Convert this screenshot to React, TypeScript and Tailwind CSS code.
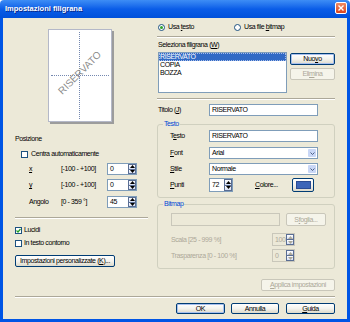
import clsx from "clsx";
import { ReactNode } from "react";

const Sep = ({ className }: { className?: string }) => (
  <div className={clsx("h-[2px] border-t border-t-[#ACA899] border-b border-b-white", className)} />
);

const Btn = ({
  children,
  className,
  disabled,
  def,
}: {
  children: ReactNode;
  className?: string;
  disabled?: boolean;
  def?: boolean;
}) => (
  <div
    className={clsx(
      "flex items-center justify-center rounded-[2px] border",
      disabled
        ? "border-[#C9C7BA] bg-[#F5F4EA] text-[#ACA899]"
        : "border-[#003C74] bg-linear-to-b from-white via-[#F4F3EE] to-[#DDDACB] text-black",
      def && "shadow-[inset_0_0_0_1px_#A8C0EE]",
      className
    )}
  >
    {children}
  </div>
);

const Arrow = ({ up, disabled }: { up?: boolean; disabled?: boolean }) => (
  <svg width="5" height="3" viewBox="0 0 5 3" className="block">
    <path d={up ? "M0 3L2.5 0L5 3Z" : "M0 0L2.5 3L5 0Z"} fill={disabled ? "#ACA899" : "#000"} />
  </svg>
);

const Spin = ({
  value,
  className,
  disabled,
}: {
  value: string;
  className?: string;
  disabled?: boolean;
}) => (
  <div
    className={clsx(
      "flex border",
      disabled ? "border-[#C9C7BA] bg-[#ECE9D8] text-[#ACA899]" : "border-[#7F9DB9] bg-white",
      className
    )}
  >
    <div className="flex-1 flex items-center pl-[2px]">{value}</div>
    <div className="w-[8px] flex flex-col">
      <div className="flex-1 flex items-center justify-center border border-[#5A6E94] bg-linear-to-b from-white to-[#D6DFF5]">
        <Arrow up disabled={disabled} />
      </div>
      <div className="flex-1 flex items-center justify-center border border-t-0 border-[#5A6E94] bg-linear-to-b from-white to-[#D6DFF5]">
        <Arrow disabled={disabled} />
      </div>
    </div>
  </div>
);

const Select = ({ value }: { value: string }) => (
  <div className="w-[109px] h-[12px] flex border border-[#7F9DB9] bg-white">
    <div className="flex-1 flex items-center pl-[2px]">{value}</div>
    <div className="w-[8px] m-[1px] flex items-center justify-center rounded-[1px] bg-[#C9D7F6]">
      <svg width="5" height="3" viewBox="0 0 5 3">
        <path d="M0.5 0.5L2.5 2.5L4.5 0.5" stroke="#4D6185" strokeWidth="1" fill="none" />
      </svg>
    </div>
  </div>
);

const Check = ({ checked }: { checked?: boolean }) => (
  <div className="w-[7px] h-[7px] border border-[#1C5180] bg-white flex items-center justify-center">
    {checked && (
      <svg width="5" height="5" viewBox="0 0 5 5">
        <path d="M0.5 2.5L2 4L4.5 1" stroke="#21A121" strokeWidth="1.2" fill="none" />
      </svg>
    )}
  </div>
);

const Radio = ({ checked }: { checked?: boolean }) => (
  <div className="w-[7px] h-[7px] rounded-full border border-[#1C5180] bg-white flex items-center justify-center">
    {checked && <div className="w-[3px] h-[3px] rounded-full bg-[#2DA12D]" />}
  </div>
);

const Group = ({
  label,
  className,
  children,
}: {
  label: string;
  className?: string;
  children: ReactNode;
}) => (
  <div className={clsx("relative border border-[#D0D0BF] rounded-[3px] flex flex-col", className)}>
    <span className="absolute -top-[5px] left-[5px] px-[1px] bg-[#ECE9D8] text-[#0046D5]">{label}</span>
    {children}
  </div>
);

const PosRow = ({ label, range, value, className }: { label: ReactNode; range: string; value: string; className?: string }) => (
  <div className={clsx("flex items-center h-[12px]", className)}>
    <span className="ml-[14px] w-[32px]">{label}</span>
    <span className="w-[46px]">{range}</span>
    <Spin value={value} className="w-[30px] h-[12px]" />
  </div>
);

const TextRow = ({ label, children, className }: { label: ReactNode; children: ReactNode; className?: string }) => (
  <div className={clsx("flex items-center", className)}>
    <span className="ml-[12px] w-[39px]">{label}</span>
    {children}
  </div>
);

export default function App() {
  return (
    <div className="w-[350px] h-[322px] flex flex-col font-['Liberation_Sans',Arial,sans-serif] text-[7px] leading-[8px] tracking-[-0.4px] text-black select-none">
      {/* TITLE BAR */}
      <div className="h-[18px] flex items-start justify-between pl-[5px] pr-[3px] rounded-t-[4px] bg-linear-to-b from-[#3D8DF5] via-[#0A5DE8] to-[#0050DA]">
        <span className="mt-[5px] text-[7.5px] tracking-normal font-bold text-white [text-shadow:1px_1px_0_#0A2A8A]">
          Impostazioni filigrana
        </span>
        <div className="mt-[2px] w-[12px] h-[12px] rounded-[2px] border border-white bg-linear-to-b from-[#F08A62] to-[#D9421A] flex items-center justify-center">
          <svg width="6" height="6" viewBox="0 0 6 6">
            <path d="M0.5 0.5L5.5 5.5M5.5 0.5L0.5 5.5" stroke="white" strokeWidth="1.4" />
          </svg>
        </div>
      </div>

      {/* BODY */}
      <div className="flex-1 flex flex-col bg-[#ECE9D8] border-x-[3px] border-b-[3px] border-[#0055E5] pl-[12px]">
        <div className="flex items-start gap-[9px]">
          {/* LEFT */}
          <div className="w-[133px] flex flex-col">
            <div className="ml-[33px] mt-[11px] w-[64px] h-[93px] relative bg-white border border-[#B4B8C8] shadow-[2px_2px_0_#9C9C9C]">
              <div className="absolute left-[30px] top-[2px] bottom-[2px] border-l border-dotted border-[#7488B0]" />
              <div className="absolute top-[45px] left-[2px] right-[2px] border-t border-dotted border-[#7488B0]" />
              <div className="absolute inset-0 flex items-center justify-center">
                <span className="-rotate-45 -translate-y-[3px] text-[10px] leading-[10px] tracking-normal text-[#8C8C8C]">
                  RISERVATO
                </span>
              </div>
            </div>
            <div className="mt-[13px]">Posizione</div>
            <div className="mt-[7px] ml-[6px] flex items-center gap-[3px] h-[8px]">
              <Check />
              <span>Centra automaticamente</span>
            </div>
            <PosRow label={<u>x</u>} range="[-100 - +100]" value="0" className="mt-[5px]" />
            <PosRow label={<u>y</u>} range="[-100 - +100]" value="0" className="mt-[4px]" />
            <PosRow label="Angolo" range="[0 - 359 °]" value="45" className="mt-[5px]" />
            <Sep className="mt-[9px]" />
            <div className="mt-[7px] flex items-center gap-[2px] h-[8px]">
              <Check checked />
              <span>Lucidi</span>
            </div>
            <div className="mt-[5px] flex items-center gap-[2px] h-[8px]">
              <Check />
              <span>In testo contorno</span>
            </div>
            <Btn className="mt-[8px] w-[100px] h-[12px]">
              <span>
                Impostazioni personalizzate (<u>K</u>)...
              </span>
            </Btn>
          </div>

          {/* RIGHT */}
          <div className="w-[178px] flex flex-col">
            <div className="mt-[5px] ml-[1px] flex items-center h-[8px]">
              <div className="w-[76px] flex items-center gap-[3px]">
                <Radio checked />
                <span>
                  Usa <u>t</u>esto
                </span>
              </div>
              <div className="flex items-center gap-[3px]">
                <Radio />
                <span>
                  Usa file <u>b</u>itmap
                </span>
              </div>
            </div>
            <Sep className="mt-[5px]" />
            <div className="mt-[3px] ml-[1px]">
              Seleziona filigrana (<u>W</u>)
            </div>
            <div className="mt-[3px] ml-[1px] flex items-start">
              <div className="w-[130px] h-[41px] border border-[#7F9DB9] bg-white flex flex-col">
                <div className="h-[8px] bg-[#316AC5] text-white pl-[1px] outline outline-dotted outline-[#A8BCE8] -outline-offset-1">
                  RISERVATO
                </div>
                <div className="h-[8px] pl-[1px]">COPIA</div>
                <div className="h-[8px] pl-[1px]">BOZZA</div>
              </div>
              <div className="ml-[3px] flex flex-col">
                <Btn def className="mt-[1px] w-[45px] h-[12px]">
                  <span>
                    Nuo<u>v</u>o
                  </span>
                </Btn>
                <Btn disabled className="mt-[3px] w-[45px] h-[12px]">
                  <span>
                    Eli<u>m</u>ina
                  </span>
                </Btn>
              </div>
            </div>
            <Sep className="mt-[5px]" />
            <div className="mt-[4px] flex items-center h-[12px]">
              <span className="ml-[1px] w-[51px]">
                Titolo (<u>J</u>)
              </span>
              <div className="w-[109px] h-[12px] border border-[#7F9DB9] bg-white flex items-center pl-[2px]">RISERVATO</div>
            </div>

            <Group label="Testo" className="mt-[8px] h-[74px]">
              <TextRow label={<span>T<u>e</u>sto</span>} className="mt-[5px]">
                <div className="w-[109px] h-[12px] border border-[#7F9DB9] bg-white flex items-center pl-[2px]">RISERVATO</div>
              </TextRow>
              <TextRow label={<span><u>F</u>ont</span>} className="mt-[5px]">
                <Select value="Arial" />
              </TextRow>
              <TextRow label={<span><u>S</u>tile</span>} className="mt-[4px]">
                <Select value="Normale" />
              </TextRow>
              <TextRow label={<span><u>P</u>unti</span>} className="mt-[3px]">
                <Spin value="72" className="w-[24px] h-[14px]" />
                <span className="ml-[22px] w-[37px]">
                  <u>C</u>olore...
                </span>
                <Btn className="w-[22px] h-[14px]">
                  <div className="w-[15px] h-[8px] bg-[#3E66B8] border border-[#2B4C93]" />
                </Btn>
              </TextRow>
            </Group>

            <Group label="Bitmap" className="mt-[6px] h-[65px]">
              <div className="mt-[8px] ml-[13px] flex items-center">
                <div className="w-[109px] h-[13px] border border-[#C9C7BA] bg-[#ECE9D8]" />
                <Btn disabled className="ml-[6px] w-[40px] h-[13px]">
                  <span>
                    S<u>f</u>oglia...
                  </span>
                </Btn>
              </div>
              <div className="mt-[7px] ml-[13px] flex items-center text-[#ACA899]">
                <span className="w-[101px]">Scala [25 - 999 %]</span>
                <Spin disabled value="100" className="w-[23px] h-[13px]" />
              </div>
              <div className="mt-[3px] ml-[13px] flex items-center text-[#ACA899]">
                <span className="w-[101px]">Trasparenza [0 - 100 %]</span>
                <Spin disabled value="0" className="w-[23px] h-[13px]" />
              </div>
            </Group>

            <Btn disabled className="mt-[10px] self-end w-[74px] h-[12px]">
              <span>
                <u>A</u>pplica impostazioni
              </span>
            </Btn>
          </div>
        </div>

        <Sep className="mt-[5px] w-[320px]" />
        <div className="mt-[5px] w-[320px] flex justify-end">
          <Btn def className="w-[49px] h-[11px]">OK</Btn>
          <Btn className="ml-[6px] w-[48px] h-[11px]">Annulla</Btn>
          <Btn className="ml-[7px] w-[49px] h-[11px]">
            <span>
              <u>G</u>uida
            </span>
          </Btn>
        </div>
      </div>
    </div>
  );
}
